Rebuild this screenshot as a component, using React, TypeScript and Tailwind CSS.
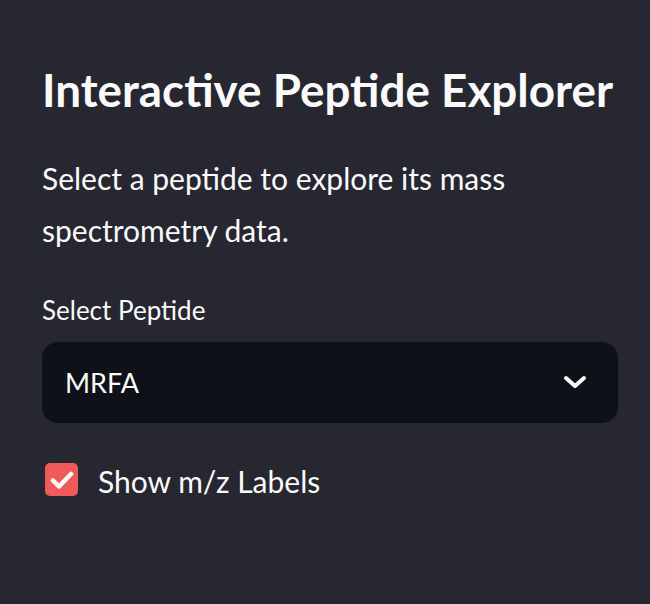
import { useState } from 'react';

const PEPTIDES = ['MRFA', 'Angiotensin II', 'Bradykinin', 'Substance P'];

export default function App() {
  const [peptide] = useState(PEPTIDES[0]);
  const [showLabels, setShowLabels] = useState(true);

  return (
    <div
      className="w-[650px] h-[604px] bg-[#262730] text-[#fafafa] pl-[42px] pt-[60px] flex flex-col"
      style={{ fontFamily: 'Lato, "Noto Sans", sans-serif' }}
    >
      {/* Title */}
      <h1 className="text-[45.8px] font-bold leading-[60px] whitespace-nowrap">
        Interactive Peptide Explorer
      </h1>

      {/* Description */}
      <p className="mt-[32px] w-[560px] text-[30px] leading-[52px]">
        Select a peptide to explore its mass spectrometry data.
      </p>

      {/* Select */}
      <label className="mt-[36px] text-[26px] leading-[36px]">Select Peptide</label>
      <button className="mt-[14px] h-[81px] w-[576px] rounded-[16px] bg-[#0e1117] flex items-center justify-between pl-[23px] pr-[31px]">
        <span className="text-[27px] leading-[32px]">{peptide}</span>
        <svg width="24" height="14" viewBox="0 0 24 14" fill="none" className="mt-[-1px]">
          <path d="M3 3l9 8 9-8" stroke="#fafafa" strokeWidth="4" strokeLinecap="round" strokeLinejoin="round" />
        </svg>
      </button>

      {/* Checkbox */}
      <label
        className="mt-[38px] flex items-center gap-[20px] cursor-pointer h-[40px]"
        onClick={() => setShowLabels(!showLabels)}
      >
        <span className="w-[33px] h-[33px] rounded-[5px] bg-[#f05a5a] flex items-center justify-center ml-[3px] mt-[-3px]">
          {showLabels && (
            <svg width="24" height="20" viewBox="0 0 24 20" fill="none">
              <path d="M3 10.5l6 6L21 4" stroke="#fafafa" strokeWidth="4.5" strokeLinecap="round" strokeLinejoin="round" />
            </svg>
          )}
        </span>
        <span className="text-[30px] leading-[40px]">Show m/z Labels</span>
      </label>
    </div>
  );
}
